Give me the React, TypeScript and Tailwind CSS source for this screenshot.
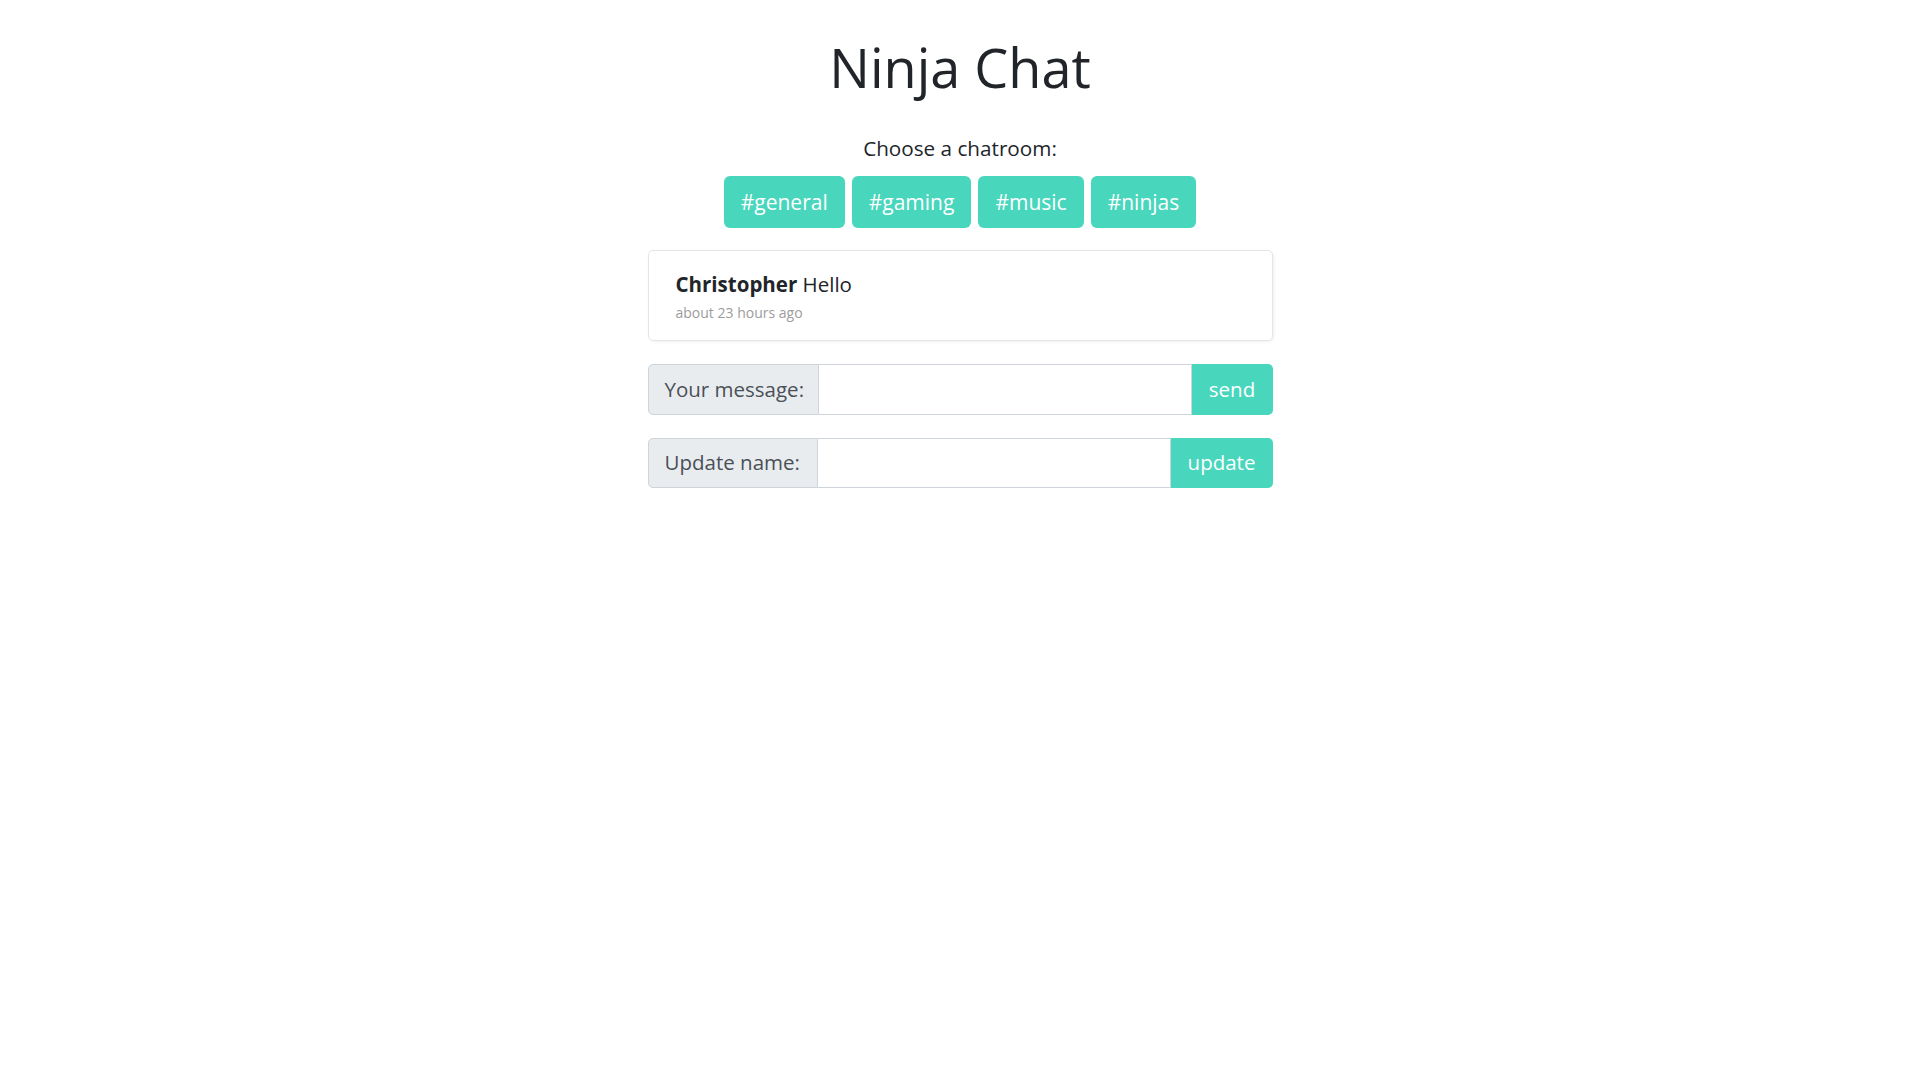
import React from "react";

const rooms = ["#general", "#gaming", "#music", "#ninjas"];

export default function App() {
  return (
    <div
      className="min-h-screen bg-white text-[#212529]"
      style={{ fontFamily: '"Open Sans", "Noto Sans", sans-serif' }}
    >
      <div className="w-[625px] mx-auto pt-[35px]">
        <h1 className="text-center text-[54px] leading-[1.2] font-medium text-[#212529]">
          Ninja Chat
        </h1>
        <p className="text-center text-[20.7px] leading-[30px] mt-[33px] text-[#212529]">
          Choose a chatroom:
        </p>
        <div className="flex justify-center gap-[7px] mt-[13px]">
          {rooms.map((r) => (
            <button
              key={r}
              className="bg-[#48d6bc] text-white text-[21px] leading-[30px] py-[11px] px-[17px] rounded-[6px]"
            >
              {r}
            </button>
          ))}
        </div>
        <div className="mt-[22px] border border-[#e5e5e5] rounded-[5px] shadow-[1px_1px_3px_rgba(0,0,0,0.06)] px-[27px] pt-[18px] pb-[17px]">
          <div className="text-[20.5px] leading-[30px] text-[#212529]">
            <span className="font-bold">Christopher</span> Hello
          </div>
          <div className="mt-[3px] text-[14px] leading-[21px] text-[#9c9c9c]">about 23 hours ago</div>
        </div>
        <div className="mt-[23px] flex h-[51px]">
          <div className="shrink-0 whitespace-nowrap flex items-center px-[16px] bg-[#e9ecef] border border-[#ced4da] rounded-l-[5px] text-[20.5px] text-[#495057] w-[171px]">
            Your message:
          </div>
          <input className="flex-1 min-w-0 border-y border-r border-[#ced4da] bg-white outline-none px-3 text-[20px]" />
          <button className="shrink-0 w-[81px] bg-[#48d6bc] text-white text-[20.5px] rounded-r-[5px]">send</button>
        </div>
        <div className="mt-[23px] flex h-[50px]">
          <div className="shrink-0 whitespace-nowrap flex items-center px-[16px] bg-[#e9ecef] border border-[#ced4da] rounded-l-[5px] text-[20.5px] text-[#495057] w-[170px]">
            Update name:
          </div>
          <input className="flex-1 min-w-0 border-y border-r border-[#ced4da] bg-white outline-none px-3 text-[20px]" />
          <button className="shrink-0 w-[102px] bg-[#48d6bc] text-white text-[20.5px] rounded-r-[5px]">update</button>
        </div>
      </div>
    </div>
  );
}
